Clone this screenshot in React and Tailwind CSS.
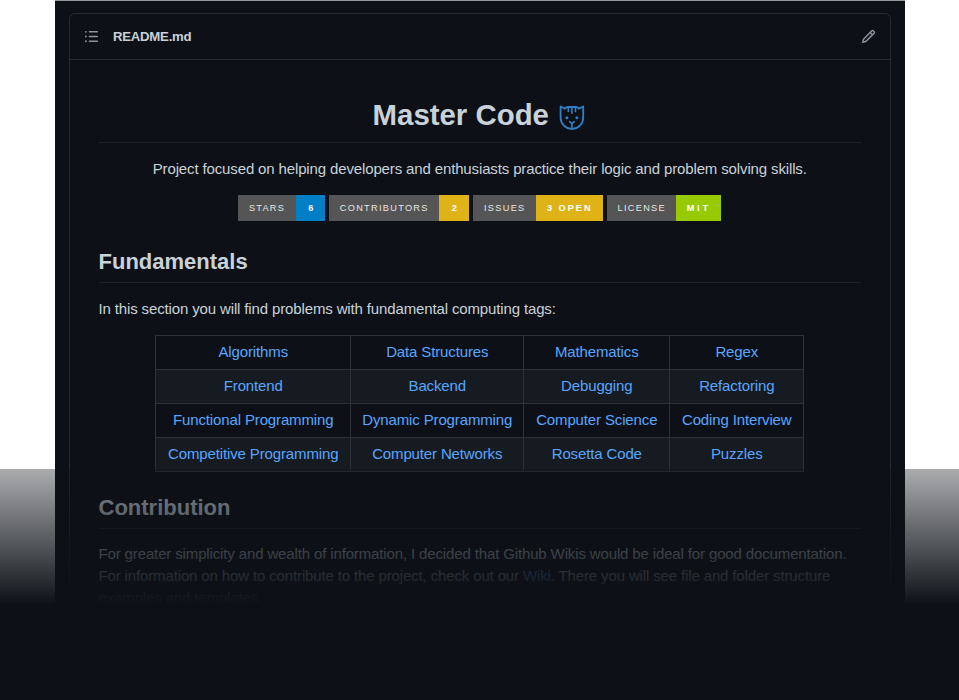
const topics = [
  ["Algorithms", "Data Structures", "Mathematics", "Regex"],
  ["Frontend", "Backend", "Debugging", "Refactoring"],
  ["Functional Programming", "Dynamic Programming", "Computer Science", "Coding Interview"],
  ["Competitive Programming", "Computer Networks", "Rosetta Code", "Puzzles"],
];

function Badge({ label, value, labelClass, valueClass }) {
  return (
    <div className="flex h-[26px] items-center text-[9.2px] leading-[27px] whitespace-nowrap text-white">
      <span className={`flex h-full justify-center bg-[#555] text-[#e6e6e6] ${labelClass}`}>{label}</span>
      <span className={`flex h-full justify-center font-bold ${valueClass}`}>{value}</span>
    </div>
  );
}

function ListIcon() {
  return (
    <svg viewBox="0 0 16 16" className="size-[15px] fill-[#8b949e]">
      <path d="M2 4a1 1 0 1 0 0-2 1 1 0 0 0 0 2Zm3.75-1.75a.75.75 0 0 0 0 1.5h8.5a.75.75 0 0 0 0-1.5h-8.5Zm0 5a.75.75 0 0 0 0 1.5h8.5a.75.75 0 0 0 0-1.5h-8.5Zm0 5a.75.75 0 0 0 0 1.5h8.5a.75.75 0 0 0 0-1.5h-8.5ZM3 8a1 1 0 1 1-2 0 1 1 0 0 1 2 0Zm-1 6a1 1 0 1 0 0-2 1 1 0 0 0 0 2Z" />
    </svg>
  );
}

function PencilIcon() {
  return (
    <svg viewBox="0 0 16 16" className="size-[15px] fill-[#8b949e]">
      <path fillRule="evenodd" d="M11.013 1.427a1.75 1.75 0 0 1 2.474 0l1.086 1.086a1.75 1.75 0 0 1 0 2.474l-8.61 8.61c-.21.21-.47.364-.756.445l-3.251.93a.75.75 0 0 1-.927-.928l.929-3.25a1.75 1.75 0 0 1 .445-.758l8.61-8.61Zm1.414 1.06a.25.25 0 0 0-.354 0L10.811 3.75l1.439 1.44 1.263-1.263a.25.25 0 0 0 0-.354l-1.086-1.086ZM11.189 6.25 9.75 4.81l-6.286 6.287a.25.25 0 0 0-.064.108l-.558 1.953 1.953-.558a.249.249 0 0 0 .108-.064l6.286-6.286Z" />
    </svg>
  );
}

function CatIcon() {
  return (
    <svg viewBox="0 0 26 26" className="h-[26px] w-[26px]" fill="none" stroke="#2f7fc9" strokeWidth="1.8" strokeLinecap="round" strokeLinejoin="round">
      <path d="M1.6 1.5v11.2a11.2 11.2 0 0 0 22.6 0V1.5L19.8 3.6Q18.5 2.1 16.5 2H9.3Q7.3 2.1 6 3.6L1.6 1.5Z" />
      <path d="M9.3 2.2v4.3M12.9 2.2v6M16.5 2.2v4.3M10.6 16.6l2.3 2 2.3-2M12.9 18.6v4.2" strokeWidth="1.6" />
      <circle cx="7.9" cy="12.8" r="1.5" fill="#2f7fc9" stroke="none" />
      <circle cx="17.9" cy="12.8" r="1.5" fill="#2f7fc9" stroke="none" />
    </svg>
  );
}

export default function App() {
  return (
    <div className="relative h-[700px] w-[959px] overflow-hidden bg-white font-['Liberation_Sans',Arial,sans-serif] text-[15px] leading-[22px] tracking-[-0.136px] text-[#c9d1d9]">
      <main className="mr-[54px] ml-[55px] h-full border-t border-[#929999] bg-[#0d1117] pt-[12px]">
        <article className="mr-[14px] ml-[13.5px] h-[720px] rounded-t-[6px] border border-[#272b32]">
          <header className="flex h-[46px] items-center border-b border-[#272b32] pr-[14px] pl-[14px]">
            <ListIcon />
            <span className="ml-[14.5px] text-[13.2px] font-bold tracking-[-0.25px]">README.md</span>
            <span className="ml-auto"><PencilIcon /></span>
          </header>
          <div className="px-[29px]">
            <h1 className="flex h-[83px] items-start justify-center border-b border-[#1e2329] pt-[36px] pr-[2px] text-[29.4px] leading-[37px] font-bold tracking-normal">
              <span>Master Code</span>
              <span className="mt-[9px] ml-[10px]"><CatIcon /></span>
            </h1>
            <p className="mt-[14.5px] text-center whitespace-nowrap">
              Project focused on helping developers and enthusiasts practice their logic and problem solving skills.
            </p>
            <div className="mt-[15px] flex justify-center gap-[4px] pr-[0.5px]">
              <Badge label="STARS" value="6" labelClass="w-[58.5px] tracking-[1.2px]" valueClass="w-[29px] bg-[#007ec6]" />
              <Badge label="CONTRIBUTORS" value="2" labelClass="w-[110px] tracking-[1.3px]" valueClass="w-[30px] bg-[#dfb317]" />
              <Badge label="ISSUES" value="3 OPEN" labelClass="w-[63px] tracking-[1.3px]" valueClass="w-[67px] bg-[#dfb317] tracking-[2px]" />
              <Badge label="LICENSE" value="MIT" labelClass="w-[69px] tracking-[1.3px]" valueClass="w-[45px] bg-[#97ca00] tracking-[2.8px]" />
            </div>
            <h2 className="mt-[21.5px] h-[41px] border-b border-[#1e2329] pt-[6px] text-[22px] leading-[28px] font-bold tracking-normal">Fundamentals</h2>
            <p className="mt-[15px] whitespace-nowrap">In this section you will find problems with fundamental computing tags:</p>
            <div className="mx-auto mt-[15px] w-[649px] border-t border-l border-[#2d3239] text-center text-[#58a6ff]">
              {topics.map((row, i) => (
                <div key={i} className={`grid h-[34px] grid-cols-[195px_173px_146px_134px] border-b border-[#2d3239] leading-[32px] whitespace-nowrap ${i % 2 ? "bg-[#161b22]" : ""}`}>
                  {row.map((topic) => (
                    <a key={topic} className="border-r border-[#2d3239]">{topic}</a>
                  ))}
                </div>
              ))}
            </div>
            <h2 className="mt-[16px] h-[41px] border-b border-[#24282f] pt-[6px] text-[22px] leading-[28px] font-bold tracking-normal">Contribution</h2>
            <p className="mt-[14px] whitespace-nowrap">
              For greater simplicity and wealth of information, I decided that Github Wikis would be ideal for good documentation.<br />
              For information on how to contribute to the project, check out our <a className="text-[#58a6ff]">Wiki</a>. There you will see file and folder structure<br />
              examples and templates.
            </p>
          </div>
        </article>
      </main>
      <div className="absolute inset-x-0 top-[469px] flex h-[231px] flex-col">
        <div className="h-[136px] bg-linear-to-b from-[#0d1117]/35 to-[#0d1117]" />
        <div className="flex-1 bg-[#0d1117]" />
      </div>
    </div>
  );
}
